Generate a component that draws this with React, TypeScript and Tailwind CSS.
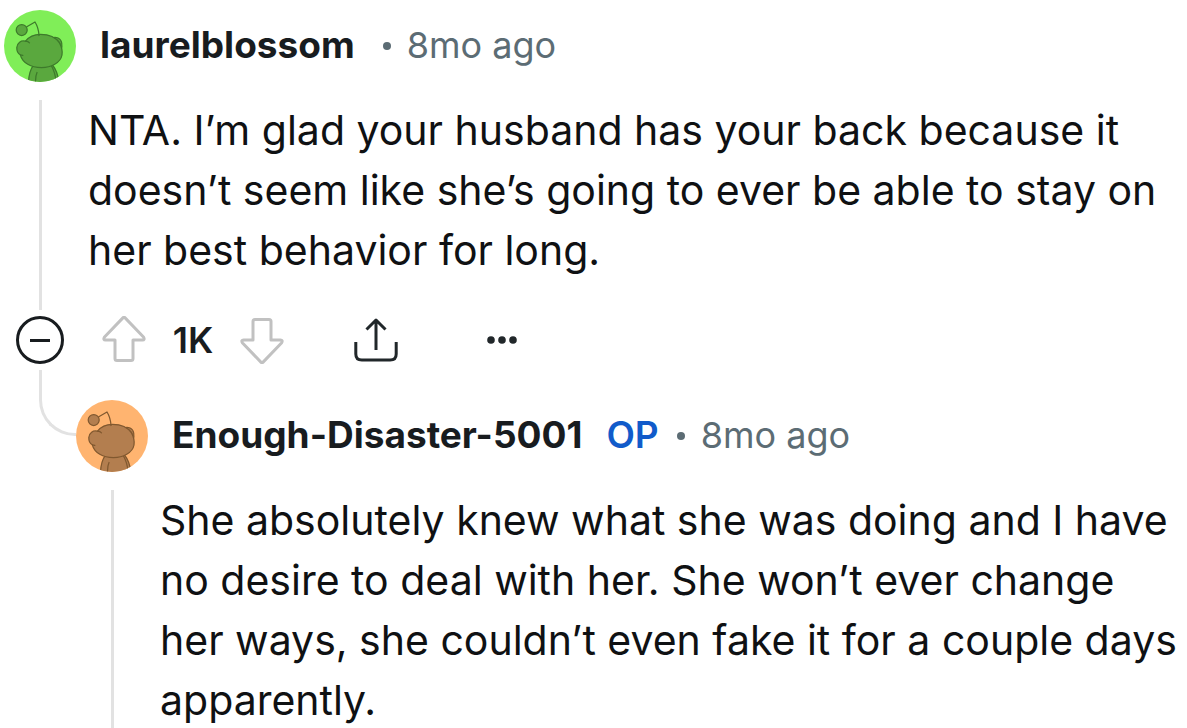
import type { ReactNode } from "react";

type Tone = "green" | "orange";

const tones: Record<Tone, { bg: string; fill: string; line: string }> = {
  green: { bg: "#80ee58", fill: "#5aa83e", line: "#3d7a2b" },
  orange: { bg: "#ffb470", fill: "#b37e4f", line: "#80582f" },
};

function Avatar({ tone, name }: { tone: Tone; name: string }) {
  const { bg, fill, line } = tones[tone];
  return (
    <svg
      role="img"
      aria-label={`${name} avatar`}
      viewBox="0 0 72 72"
      className="size-[72px] shrink-0 rounded-full"
      fill={fill}
      stroke={line}
      strokeWidth="1.25"
      strokeLinecap="round"
      strokeLinejoin="round"
    >
      <rect width="72" height="72" fill={bg} stroke="none" />
      <path d="M29.5 55C26.5 59 24.6 64 24.4 74H55C54.5 66 52.500 60 48.500 55Z" />
      <path d="M33 62.500Q31.300 66 31.500 73M47.500 56Q51 62 52 71" fill="none" />
      <path d="M48 28C52 26 57 28.500 57.700 33C58.200 36 58 38 57 40Z" />
      <path d="M50.500 28.800C54 30 56.500 33 56.800 37" fill="none" />
      <path d="M21.500 31.200C25 26.500 30 24.300 36.500 24.300C45 24.300 52 27.500 55.500 33C57.500 36.500 58.600 41 58 45C56.500 53 47 57.600 37.500 57.600C27 57.600 18.500 53 16.300 44.800C13.800 43.500 12.700 40.500 12.800 37.500C13.200 33 17 30 21.500 31.200Z" />
      <path d="M21.500 31.200Q24.200 31.300 25.500 32.800M16.300 44.800L18.800 45.300" fill="none" />
      <path d="M22.800 16.800L31 12Q34.500 17.500 35 25.500" fill="none" />
      <circle cx="17.700" cy="20" r="5.500" />
    </svg>
  );
}

function VoteArrow({ down = false }: { down?: boolean }) {
  return (
    <svg
      aria-hidden="true"
      viewBox="0 0 44 48"
      className={down ? "h-12 w-11 rotate-180" : "h-12 w-11"}
      fill="none"
      stroke="#c1c1c1"
      strokeWidth="3"
      strokeLinejoin="round"
    >
      <path d="M20.900 1.900Q22 .800 23.100 1.900L41.700 21.300Q43 24 40.500 24H31V42.500Q31 44.500 29 44.500H15Q13 44.500 13 42.500V24H3.500Q1 24 2.300 21.300Z" />
    </svg>
  );
}

type CommentProps = {
  author: string;
  age: string;
  tone: Tone;
  op?: boolean;
  text: string;
  children?: ReactNode;
};

function Comment({ author, age, tone, op = false, text, children }: CommentProps) {
  return (
    <article className="min-w-0 flex-1">
      <header className="flex items-center text-[36px] leading-[48px]">
        <Avatar tone={tone} name={author} />
        <a href="#author" className="ml-6 pb-0.5 text-[37px] font-bold text-[#181c1f]">
          {author}
        </a>
        {op && <span className="ml-6 pb-0.5 text-[37px] font-semibold text-[#115bca]">OP</span>}
        <span aria-hidden="true" className={op ? "ml-[18px] size-2 rounded-full bg-[#5c6c74]" : "ml-7 size-2 rounded-full bg-[#5c6c74]"} />
        <time className="ml-4 pb-0.5 text-[#5c6c74]">{age}</time>
      </header>
      <div className="mt-[18px] flex">
        <div className="ml-[35px] w-[3px] shrink-0 bg-[#e2e2e2]" />
        <p className="ml-[46px] pr-2 pb-[30px] text-[41px] leading-[60px] text-[#0f1113]">{text}</p>
      </div>
      {children}
    </article>
  );
}

function Actions() {
  return (
    <div className="my-1.5 flex h-12 items-center">
      <button type="button" aria-label="Collapse thread" className="ml-3 flex size-12 items-center justify-center rounded-full border-3 border-[#181c1f]">
        <span className="h-[3px] w-5 bg-[#181c1f]" />
      </button>
      <button type="button" aria-label="Upvote" className="ml-[38px]">
        <VoteArrow />
      </button>
      <span className="w-[94px] text-center text-[36px] leading-[48px] font-semibold text-[#181c1f]">1K</span>
      <button type="button" aria-label="Downvote">
        <VoteArrow down />
      </button>
      <button type="button" aria-label="Share" className="ml-[70px]">
        <svg aria-hidden="true" viewBox="0 0 44 48" className="h-12 w-11" fill="none" stroke="#21272a" strokeWidth="3">
          <path d="M22 34V4M12.500 13.500L22 4L31.500 13.500M1.800 26V38Q1.800 44 7.800 44H36.200Q42.200 44 42.200 38V26" strokeLinejoin="round" />
        </svg>
      </button>
      <button type="button" aria-label="More options" className="ml-[88px]">
        <svg aria-hidden="true" viewBox="0 0 32 8" className="h-2 w-8" fill="#21272a">
          <circle cx="5" cy="4" r="3.800" />
          <circle cx="16" cy="4" r="3.800" />
          <circle cx="27" cy="4" r="3.800" />
        </svg>
      </button>
    </div>
  );
}

export default function App() {
  return (
    <main className="bg-white pt-2.5 pl-1 font-['Inter',sans-serif]">
      <Comment
        author="laurelblossom"
        age="8mo ago"
        tone="green"
        text="NTA. I’m glad your husband has your back because it doesn’t seem like she’s going to ever be able to stay on her best behavior for long."
      >
        <Actions />
        <div className="flex items-start">
          <div className="ml-[35px] h-[66px] w-[37px] shrink-0 rounded-bl-[36px] border-b-3 border-l-3 border-[#e2e2e2]" />
          <div className="mt-[30px] flex min-w-0 flex-1">
            <Comment
              author="Enough-Disaster-5001"
              age="8mo ago"
              tone="orange"
              op
              text="She absolutely knew what she was doing and I have no desire to deal with her. She won’t ever change her ways, she couldn’t even fake it for a couple days apparently."
            />
          </div>
        </div>
      </Comment>
    </main>
  );
}
